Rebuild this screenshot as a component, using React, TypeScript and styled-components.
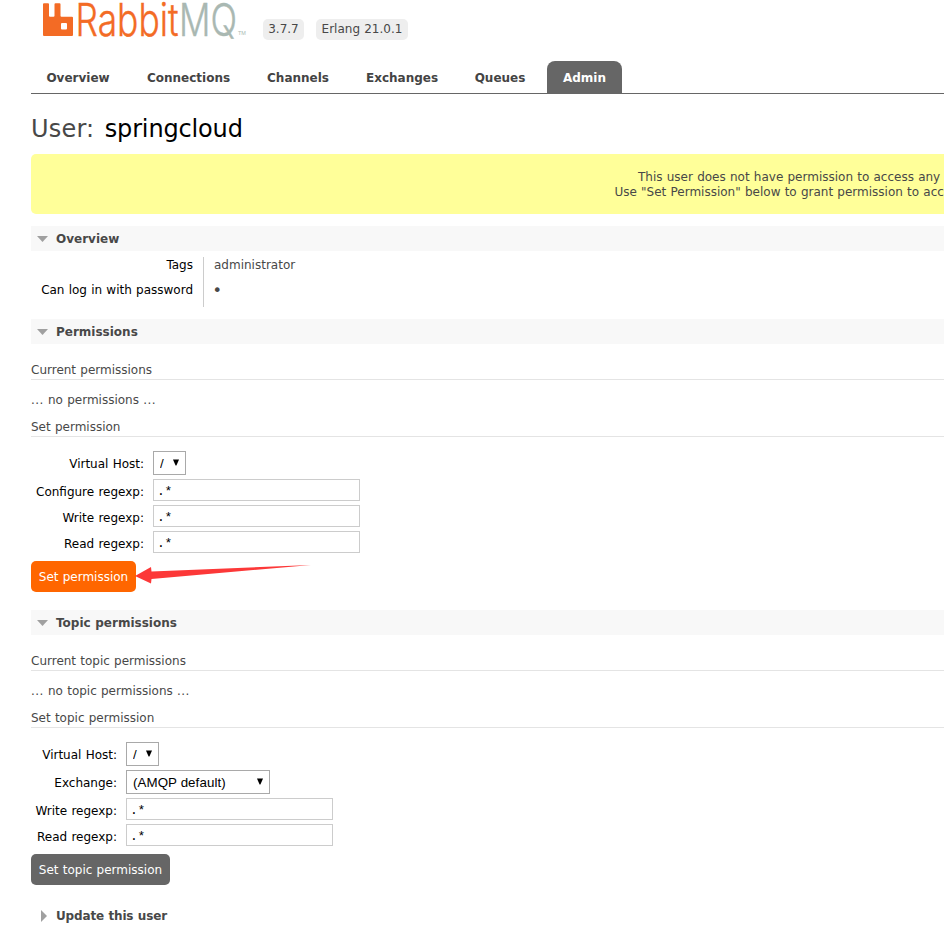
import React from "react";
import styled, { createGlobalStyle } from "styled-components";

const GlobalStyle = createGlobalStyle`
  * { box-sizing: border-box; }
  html, body { margin: 0; background: #fff; }
  body {
    font: 12px/15px Verdana, "DejaVu Sans", sans-serif;
    word-spacing: 0.4px;
    color: #484848;
    overflow: hidden;
  }
`;

const Viewport = styled.div`
  height: 930px;
  overflow: hidden;
`;

const Page = styled.div`
  width: 1630px;
  padding-left: 31px;
`;

const Header = styled.header`
  display: flex;
  height: 61px;
`;

const Logo = styled.svg`
  display: block;
  width: 206px;
  height: 44px;
  margin-left: 11px;
  overflow: visible;
  word-spacing: 0;
`;

const Versions = styled.div`
  display: flex;
  gap: 12px;
  padding: 19px 0 0 15px;
`;

const Version = styled.span<{ $w: number }>`
  width: ${(p) => p.$w}px;
  height: 21px;
  line-height: 21px;
  text-align: center;
  white-space: nowrap;
  border-radius: 5px;
  background: #eee;
`;

const Tabs = styled.nav`
  display: flex;
  height: 33px;
  border-bottom: 1px solid #666;
`;

const Tab = styled.a<{ $w: number; $active?: boolean }>`
  width: ${(p) => p.$w}px;
  height: 33px;
  line-height: 34px;
  margin-left: ${(p) => (p.$active ? "7px" : "0")};
  text-align: center;
  font-weight: bold;
  white-space: nowrap;
  border-radius: 8px 8px 0 0;
  color: ${(p) => (p.$active ? "#fff" : "#444")};
  background: ${(p) => (p.$active ? "#666" : "transparent")};
`;

const Title = styled.h1`
  margin: 0;
  height: 60px;
  padding-top: 20px;
  font-size: 24px;
  line-height: 30px;
  font-weight: normal;
  letter-spacing: 0.2px;
  word-spacing: 2.5px;
  b {
    color: #000;
    font-weight: normal;
    letter-spacing: -0.15px;
  }
`;

const Notice = styled.div`
  height: 60px;
  padding-top: 16px;
  margin-bottom: 12px;
  text-align: center;
  border-radius: 5px;
  background: #ff9;
`;

const SectionTitle = styled.h2<{ $closed?: boolean }>`
  display: grid;
  grid-template-columns: 25px auto;
  align-items: center;
  justify-content: start;
  margin: 0;
  height: 25px;
  font-size: 12px;
  line-height: 17px;
  font-weight: bold;
  background: ${(p) => (p.$closed ? "transparent" : "#f8f8f8")};
  letter-spacing: ${(p) => (p.$closed ? "-0.15px" : "0")};
  svg { display: block; margin-left: 6px; }
`;

const SectionName = styled.span`
  padding-top: 1px;
`;

const Facts = styled.dl`
  display: grid;
  grid-template-columns: 173px 200px;
  grid-auto-rows: 25px;
  margin: 6px 0 12px;
  dt {
    padding: 1px 10px 0 0;
    text-align: right;
    color: #000;
    white-space: nowrap;
    border-right: 1px solid #ccc;
  }
  dd { margin: 0; padding: 1px 0 0 10px; }
`;

const Bullet = styled.span`
  font-size: 16px;
  margin-left: -1.5px;
`;

const SubTitle = styled.h3<{ $top: number }>`
  margin: ${(p) => p.$top}px 0 0;
  height: 17px;
  font-size: 12px;
  font-weight: normal;
  line-height: 15px;
  border-bottom: 1px solid #e4e4e4;
`;

const EmptyText = styled.p`
  margin: 13px 0 0;
  height: 14px;
`;

const Dots = styled.span`
  letter-spacing: 0.45px;
`;

const Form = styled.div<{ $label: number }>`
  display: grid;
  grid-template-columns: ${(p) => p.$label}px 207px;
  column-gap: 9px;
  row-gap: 4px;
  margin: 14px 0 8px;
`;

const Label = styled.label<{ $low?: boolean }>`
  align-self: center;
  padding-top: ${(p) => (p.$low ? 4 : 2)}px;
  text-align: right;
  color: #000;
  white-space: nowrap;
`;

const SelectBox = styled.div<{ $w: number }>`
  display: grid;
  width: ${(p) => p.$w}px;
  height: 24px;
  select, svg { grid-area: 1 / 1; }
  select {
    appearance: none;
    width: 100%;
    height: 24px;
    margin: 0;
    padding: 0 6px;
    border: 1px solid #a9a9a9;
    border-radius: 0;
    background: #fff;
    color: #000;
    font: 13.333px "Liberation Sans", Arial, sans-serif;
    letter-spacing: 0.08px;
  }
  svg {
    justify-self: end;
    margin: 8px 7px 0 0;
    pointer-events: none;
  }
`;

const Input = styled.input`
  width: 207px;
  height: 22px;
  padding: 2px 3px 0;
  border: 1px solid #ccc;
  color: #000;
  font: 13px "Liberation Mono", monospace;
  letter-spacing: -0.4px;
`;

const Actions = styled.div`
  display: flex;
  align-items: flex-start;
  height: 31px;
  margin-bottom: 18px;
`;

const Button = styled.button<{ $w: number; $bg: string }>`
  width: ${(p) => p.$w}px;
  height: 31px;
  padding: 1px 0 0;
  border: 0;
  border-radius: 5px;
  background: ${(p) => p.$bg};
  color: #fff;
  font: inherit;
  word-spacing: 0.4px;
  white-space: nowrap;
`;

const Arrow = styled.svg`
  display: block;
  margin-left: -1px;
`;

const Down = () => (
  <svg width="11" height="6" viewBox="0 0 11 6"><path d="M0 0h11L5.5 6z" fill="#a0a0a0" /></svg>
);
const Right = () => (
  <svg width="16" height="12" viewBox="0 0 16 12"><path d="M4 0v12l6-6z" fill="#a0a0a0" /></svg>
);

const Select = ({ w, value }: { w: number; value: string }) => (
  <SelectBox $w={w}>
    <select defaultValue={value}><option>{value}</option></select>
    <svg width="6" height="7" viewBox="0 0 6 7"><path d="M0 .5h6L3.4 6.5h-.8z" fill="#000" /></svg>
  </SelectBox>
);

const Field = ({ label }: { label: string }) => (
  <>
    <Label $low>{label}</Label>
    <Input defaultValue=".*" />
  </>
);

const Empty = ({ children }: { children: React.ReactNode }) => (
  <EmptyText><Dots>...</Dots> {children} <Dots>...</Dots></EmptyText>
);

const Section = ({ name, closed }: { name: string; closed?: boolean }) => (
  <SectionTitle $closed={closed}>
    {closed ? <Right /> : <Down />}
    <SectionName>{name}</SectionName>
  </SectionTitle>
);

export default function App() {
  return (
    <Viewport>
      <GlobalStyle />
      <Page>
        <Header>
          <Logo viewBox="0 0 206 44">
            <path
              d="M2 3.3h4q1 0 1 1v11.4q0 1 1 1h3.500q1 0 1-1v-11.4q0-1 1-1h4q1 0 1 1v11.4q0 1 1 1h10.500q1 0 1 1v17.300q0 1-1 1H2q-1 0-1-1v-30.700q0-1 1-1zM20 23q-1 0-1 1v4.500q0 1 1 1h4q1 0 1-1v-4.500q0-1-1-1z"
              fill="#f36b25"
              fillRule="evenodd"
            />
            <g fontFamily="Inter, sans-serif" fontWeight="300" fontSize="45" strokeWidth="0.4">
              <text x="33.500" y="36" fill="#f36b25" stroke="#f36b25" textLength="103" lengthAdjust="spacingAndGlyphs">Rabbit</text>
              <text x="137" y="36" fill="#a9b8b2" stroke="#a9b8b2" textLength="58" lengthAdjust="spacingAndGlyphs">MQ</text>
            </g>
            <text x="196" y="35" fontFamily="Liberation Sans, sans-serif" fontSize="5.500" fill="#a9b8b2">TM</text>
          </Logo>
          <Versions>
            <Version $w={41}>3.7.7</Version>
            <Version $w={92}>Erlang 21.0.1</Version>
          </Versions>
        </Header>
        <Tabs>
          <Tab $w={94}>Overview</Tab>
          <Tab $w={127}>Connections</Tab>
          <Tab $w={92}>Channels</Tab>
          <Tab $w={116}>Exchanges</Tab>
          <Tab $w={80}>Queues</Tab>
          <Tab $w={75} $active>Admin</Tab>
        </Tabs>
        <Title>User: <b>springcloud</b></Title>
        <Notice>
          This user does not have permission to access any virtual hosts.
          <br />
          Use "Set Permission" below to grant permission to access virtual hosts.
        </Notice>

        <Section name="Overview" />
        <Facts>
          <dt>Tags</dt><dd>administrator</dd>
          <dt>Can log in with password</dt><dd><Bullet>•</Bullet></dd>
        </Facts>

        <Section name="Permissions" />
        <SubTitle $top={19}>Current permissions</SubTitle>
        <Empty>no permissions</Empty>
        <SubTitle $top={13}>Set permission</SubTitle>
        <Form $label={113}>
          <Label>Virtual Host:</Label><Select w={33} value="/" />
          <Field label="Configure regexp:" />
          <Field label="Write regexp:" />
          <Field label="Read regexp:" />
        </Form>
        <Actions>
          <Button $w={105} $bg="#f60">Set permission</Button>
          <Arrow width="180" height="31" viewBox="0 0 180 31">
            <path d="M0 15 16 6l.5 4.500L176 4 16.500 18 16 22.500z" fill="#fc3838" />
          </Arrow>
        </Actions>

        <Section name="Topic permissions" />
        <SubTitle $top={19}>Current topic permissions</SubTitle>
        <Empty>no topic permissions</Empty>
        <SubTitle $top={13}>Set topic permission</SubTitle>
        <Form $label={86}>
          <Label>Virtual Host:</Label><Select w={33} value="/" />
          <Label>Exchange:</Label><Select w={144} value="(AMQP default)" />
          <Field label="Write regexp:" />
          <Field label="Read regexp:" />
        </Form>
        <Actions>
          <Button $w={139} $bg="#666">Set topic permission</Button>
        </Actions>
        <Section name="Update this user" closed />
      </Page>
    </Viewport>
  );
}
